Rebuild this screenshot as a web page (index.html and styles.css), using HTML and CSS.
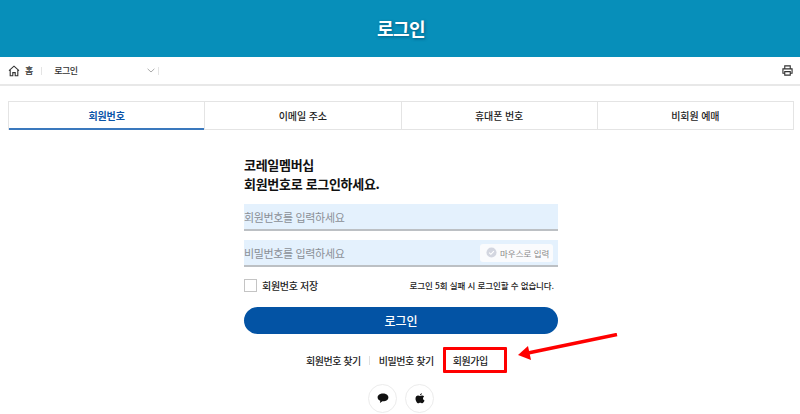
FILE: index.html
```html
<!DOCTYPE html>
<html lang="ko">
<head>
<meta charset="utf-8">
<title>로그인</title>
<link rel="stylesheet" href="styles.css">
</head>
<body>
<header class="hero"><h1>로그인</h1></header>
<nav class="crumbs">
  <svg class="home" viewBox="0 0 12 12" width="12" height="12"><path d="M1 5.6 6 1.2l5 4.4M2.2 4.800v6h2.600V7.600h2.400v3.200h2.600v-6" fill="none" stroke="#333" stroke-width="1.100"/></svg>
  <span class="home-label">홈</span>
  <i class="sep"></i>
  <span class="current">로그인</span>
  <svg class="chev" viewBox="0 0 8 5" width="8" height="5"><path d="M.6.8 4 4 7.4.8" fill="none" stroke="#aaa" stroke-width="1"/></svg>
  <i class="sep"></i>
  <svg class="print" viewBox="0 0 12 12" width="11" height="11"><path d="M3 4V1h6v3M3 9H1V4.200h10V9H9M3 7.200h6V11H3z" fill="none" stroke="#333" stroke-width="1.200"/></svg>
</nav>
<div class="tabs">
  <a class="tab active">회원번호</a>
  <a class="tab">이메일 주소</a>
  <a class="tab">휴대폰 번호</a>
  <a class="tab">비회원 예매</a>
</div>
<main class="form">
  <h2>코레일멤버십<br>회원번호로 로그인하세요.</h2>
  <div class="field first"><span>회원번호를 입력하세요</span></div>
  <div class="field second"><span>비밀번호를 입력하세요</span>
    <span class="mouse"><svg viewBox="0 0 12 12" width="11" height="11"><circle cx="6" cy="6" r="5.500" fill="#d3d6e0"/><path d="M3.400 6.200 5.300 8l3.300-3.600" fill="none" stroke="#fff" stroke-width="1.200"/></svg>마우스로 입력</span>
  </div>
  <div class="options">
    <label class="save"><i class="box"></i>회원번호 저장</label>
    <span class="warn">로그인 5회 실패 시 로그인할 수 없습니다.</span>
  </div>
  <button class="submit">로그인</button>
  <div class="links">
    <a>회원번호 찾기</a><i class="sep"></i><a>비밀번호 찾기</a><a class="join">회원가입</a>
  </div>
  <div class="social">
    <span class="circle"><svg viewBox="0 0 12 11" width="12" height="11"><path d="M6 .5C2.900.5.600 2.100.600 4.400c0 1.600 1.100 2.800 2.700 3.400L2.900 10l2.500-1.800h.6c3.100 0 5.400-1.600 5.400-3.800S9.100.5 6 .5z" fill="#111"/></svg></span>
    <span class="circle"><svg viewBox="0 0 12 13" width="10" height="11"><path d="M8.300.3c.1 1.200-1 2.500-2.300 2.400C5.900 1.500 7.100.4 8.300.3zM6.100 3.500c.6 0 1.400-.7 2.500-.6 1 0 1.800.5 2.300 1.200-2 1.200-1.600 3.900.5 4.800-.5 1.300-1.600 3.400-2.800 3.400-.9 0-1.200-.6-2.300-.6s-1.500.6-2.300.6C2.500 12.300.6 9.300.6 6.800c0-2.400 1.500-3.800 3-3.800 1 0 1.900.5 2.500.5z" fill="#111"/></svg></span>
  </div>
  <svg class="arrow" viewBox="0 0 100 30" width="100" height="30"><path d="M99 1.500 10 20" stroke="#f00" stroke-width="3.500" fill="none"/><path d="M0 22 10 13l3 14z" fill="#f00"/></svg>
</main>
</body>
</html>
```
FILE: styles.css
```css
* { box-sizing: border-box; }
html, body { margin: 0; padding: 0; }
body {
  width: 800px;
  height: 414px;
  overflow: hidden;
  background: #fff;
  color: #222;
  font-family: "Noto Sans CJK KR", "Noto Sans", sans-serif;
}
.hero {
  height: 57px;
  background: #078fba;
  display: flex;
  align-items: center;
  justify-content: center;
  padding: 0 0 2px 2px;
}
.hero h1 {
  margin: 0;
  color: #fff;
  font-size: 18px;
  font-weight: 700;
  line-height: 1;
  letter-spacing: -.5px;
  text-shadow: 1px 1px 3px rgba(0, 50, 80, .55);
}
.crumbs {
  height: 29px;
  display: flex;
  align-items: center;
  padding: 0 7px 0 8px;
  border-bottom: 2px solid #e8e8e8;
  font-size: 9px;
  font-weight: 500;
  color: #333;
}
.crumbs .sep { width: 1px; height: 8px; background: #e4e4e4; }
.home-label { margin: 0 8px 0 5px; }
.current { margin-left: 12px; width: 93px; letter-spacing: -.5px; }
.chev { margin-right: 3px; }
.print { margin-left: auto; }
.tabs {
  display: flex;
  height: 29px;
  margin: 15px 6px 0 8px;
  border: 1px solid #e4e4e4;
}
.tab {
  flex: 1;
  display: flex;
  align-items: center;
  justify-content: center;
  font-size: 10px;
  font-weight: 500;
  letter-spacing: -.1px;
  color: #222;
  border-left: 1px solid #e4e4e4;
}
.tab.active {
  border-left: 0;
  color: #0b55a8;
  font-weight: 700;
  border-bottom: 1px solid #3a78bd;
  box-shadow: inset 0 -1px 0 #3a78bd;
  margin-bottom: -1px;
}
.form {
  position: relative;
  width: 314px;
  margin: 0 0 0 244px;
  padding-top: 25px;
}
.form h2 {
  margin: 0;
  font-size: 13px;
  line-height: 19px;
  font-weight: 700;
  color: #111;
  letter-spacing: -.3px;
}
.field {
  height: 27px;
  background: #e4f1fd;
  border-bottom: 2px solid #bcc0c4;
  display: flex;
  align-items: center;
  justify-content: space-between;
  font-size: 11px;
  letter-spacing: -.35px;
  color: #8a8f96;
}
.field.first { margin-top: 11px; }
.field.second { margin-top: 9px; }
.mouse {
  display: flex;
  align-items: center;
  gap: 3px;
  width: 73px;
  height: 18px;
  padding: 0 0 0 6px;
  margin-right: 5px;
  background: #fafbfd;
  border-radius: 3px;
  font-size: 8.500px;
  letter-spacing: 0;
  color: #888;
}
.options {
  display: flex;
  align-items: center;
  justify-content: space-between;
  height: 14px;
  margin-top: 11px;
  padding-right: 4px;
}
.save {
  display: flex;
  align-items: center;
  font-size: 10px;
  font-weight: 500;
  letter-spacing: -.3px;
  color: #222;
}
.box {
  width: 13px;
  height: 13px;
  margin-right: 5px;
  border: 1px solid #c4c4c4;
  background: #fff;
}
.warn { font-size: 8.500px; font-weight: 500; letter-spacing: -.1px; color: #222; }
.submit {
  display: block;
  width: 314px;
  height: 27px;
  margin-top: 15px;
  border: 0;
  border-radius: 14px;
  background: #0353a4;
  color: #fff;
  font-family: inherit;
  font-size: 12px;
  font-weight: 500;
}
.links {
  display: flex;
  align-items: center;
  height: 26px;
  margin-top: 13px;
  margin-left: 62px;
  font-size: 10px;
  font-weight: 500;
  letter-spacing: -.45px;
  color: #222;
}
.links .sep { width: 1px; height: 9px; margin: 0 9px 0 8px; background: #e0e0e0; }
.join {
  display: flex;
  align-items: center;
  width: 64px;
  height: 26px;
  margin-left: 9px;
  padding-left: 7px;
  border: 3px solid #f00;
  border-radius: 1px;
}
.social {
  display: flex;
  justify-content: center;
  gap: 8px;
  margin-top: 11px;
}
.circle {
  width: 29px;
  height: 29px;
  border: 1px solid #ececec;
  border-radius: 50%;
  display: flex;
  align-items: center;
  justify-content: center;
}
.arrow { position: absolute; left: 274px; top: 203px; }
```
